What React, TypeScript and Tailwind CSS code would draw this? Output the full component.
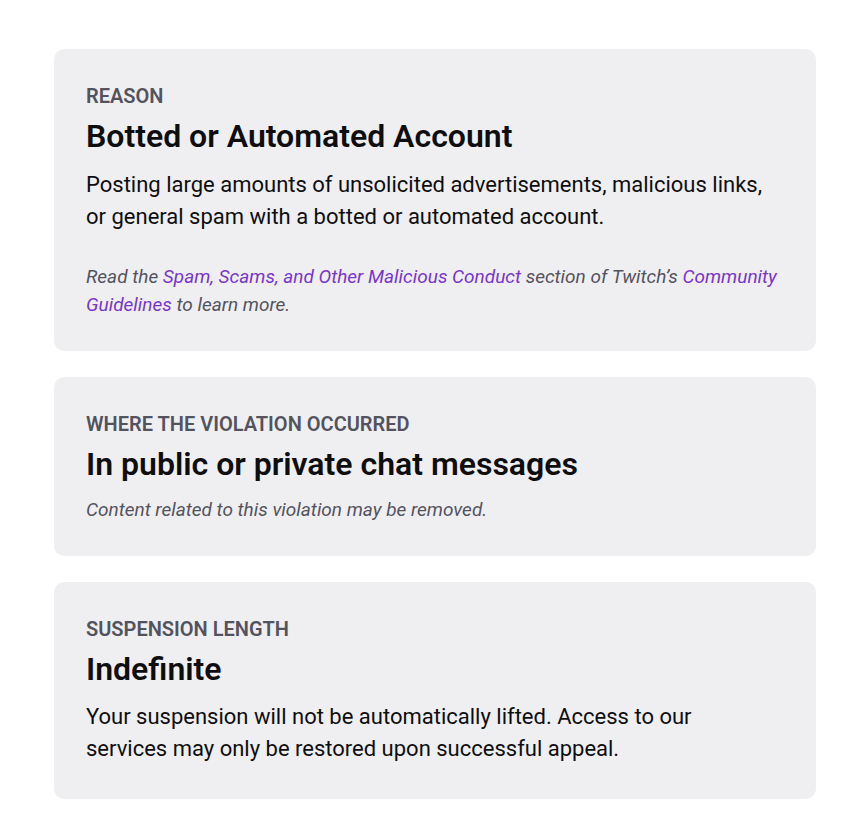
import React from "react";

function Label({ children }: { children: React.ReactNode }) {
  return <p className="text-[20px] leading-[30px] font-semibold uppercase text-[#53535f]">{children}</p>;
}

function Title({ children }: { children: React.ReactNode }) {
  return <h2 className="mt-[7px] text-[32px] leading-[36px] font-semibold text-[#0e0e10]">{children}</h2>;
}

function Link({ children }: { children: React.ReactNode }) {
  return <a href="#" className="text-[#7a36c8]">{children}</a>;
}

export default function App() {
  return (
    <div className="min-h-screen bg-white font-['Roboto',sans-serif]">
      <div className="ml-[54px] flex w-[762px] flex-col gap-[26px] pt-[49px]">
        <section className="rounded-[10px] bg-[#efeff1] p-8">
          <Label>Reason</Label>
          <Title>Botted or Automated Account</Title>
          <p className="mt-[15px] text-[22px] leading-[32px] text-[#0e0e10]">
            Posting large amounts of unsolicited advertisements, malicious links, or general spam with a botted or
            automated account.
          </p>
          <p className="mt-[30px] text-[19px] leading-[28px] italic text-[#53535f]">
            Read the <Link>Spam, Scams, and Other Malicious Conduct</Link> section of Twitch’s{" "}
            <Link>Community Guidelines</Link> to learn more.
          </p>
        </section>

        <section className="rounded-[10px] bg-[#efeff1] p-8">
          <Label>Where the violation occurred</Label>
          <Title>In public or private chat messages</Title>
          <p className="mt-[14px] text-[19px] leading-[28px] italic text-[#53535f]">
            Content related to this violation may be removed.
          </p>
        </section>

        <section className="rounded-[10px] bg-[#efeff1] p-8 pb-[34px]">
          <Label>Suspension length</Label>
          <Title>Indefinite</Title>
          <p className="mt-[14px] max-w-[660px] text-[22px] leading-[32px] text-[#0e0e10]">
            Your suspension will not be automatically lifted. Access to our services may only be restored upon
            successful appeal.
          </p>
        </section>
      </div>
    </div>
  );
}
